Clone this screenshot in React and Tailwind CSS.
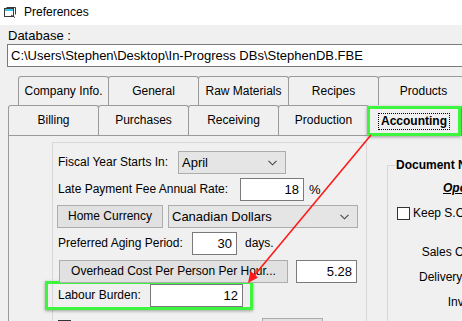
import React from 'react';

const rowOne = ['Company Info.', 'General', 'Raw Materials', 'Recipes', 'Products'];
const rowTwo = ['Billing', 'Purchases', 'Receiving', 'Production'];

function Tab({ label }) {
  return (
    <div className="w-[91px] h-full shrink-0 -mr-px flex items-center justify-center rounded-t-[3px] border-t border-l border-r border-[#9a9a9a] bg-[#f0f0f0]">
      {label}
    </div>
  );
}

function Chevron() {
  return (
    <svg width="9" height="6" viewBox="0 0 9 6" className="ml-auto mr-[8px]">
      <path d="M0.5 0.8 L4.5 4.8 L8.5 0.8" fill="none" stroke="#444" strokeWidth="1.1" />
    </svg>
  );
}

function Input({ value, className }) {
  return (
    <div className={`h-[23px] shrink-0 bg-white border border-[#7a7a7a] flex items-center justify-end pr-[4px] text-[13px] ${className}`}>
      {value}
    </div>
  );
}

function Button({ label, className }) {
  return (
    <div className={`h-[23px] shrink-0 bg-[#e1e1e1] border border-[#adadad] flex items-center justify-center text-[12px] ${className}`}>
      {label}
    </div>
  );
}

export default function App() {
  return (
    <div className="relative w-[462px] h-[321px] overflow-hidden bg-[#f0f0f0] text-black text-[12px] leading-[15px] font-['Liberation_Sans',Arial,sans-serif]">
      {/* Title bar */}
      <div className="h-[25px] bg-white flex items-center pl-[4px]">
        <svg width="12" height="11" viewBox="0 0 12 11">
          <rect x="0.5" y="1.5" width="9" height="8" fill="#fff" stroke="#3a3a3a" />
          <rect x="1" y="2" width="8" height="2" fill="#39c6e6" />
          <path d="M2.5 0.5 H11.5 V7.5" fill="none" stroke="#3a3a3a" />
          <path d="M7 8 L11 10.5" stroke="#3a3a3a" />
        </svg>
        <span className="ml-[8px] text-[12px]">Preferences</span>
      </div>

      {/* Database path */}
      <div className="pt-[3px] pl-[8px] text-[13px] h-[18px]">Database :</div>
      <div className="mt-[1px] ml-[7px] w-[480px] h-[23px] bg-white border border-[#7a7a7a] flex items-center pl-[3px] text-[13px]">
        C:\Users\Stephen\Desktop\In-Progress DBs\StephenDB.FBE
      </div>

      {/* Tabs */}
      <div className="mt-[9px] pl-[18px] flex h-[29px]">
        {rowOne.map(t => <Tab key={t} label={t} />)}
      </div>
      <div className="pl-[8px] flex h-[30px] items-start">
        {rowTwo.map(t => <Tab key={t} label={t} />)}
        <div className="relative z-10 -ml-[1px] mt-[1px] w-[94px] h-[30px] shrink-0 border-[3px] border-[#3cf53c] bg-[#f0f0f0] flex items-center justify-center shadow-[0_1px_3px_rgba(0,0,0,0.35)]">
          <span className="font-bold px-[2px] outline outline-1 outline-dotted outline-black">Accounting</span>
        </div>
        <div className="w-[90px] h-full shrink-0 rounded-t-[3px] border-t border-l border-[#9a9a9a]" />
      </div>

      {/* Tab panel */}
      <div className="ml-[8px] h-[200px] border-t border-l border-[#9a9a9a] flex items-start">
        {/* General accounting settings */}
        <div className="ml-[43px] mt-[6px] w-[315px] h-[200px] shrink-0 border-t border-l border-r border-[#d7d7d7] pl-[5px] pt-[8px]">
          <div className="flex items-center h-[23px]">
            <span className="w-[120px] shrink-0">Fiscal Year Starts In:</span>
            <div className="w-[108px] h-[23px] bg-[#e5e5e5] border border-[#acacac] flex items-center pl-[3px] text-[13px]">
              April
              <Chevron />
            </div>
          </div>

          <div className="flex items-center h-[23px] mt-[4px]">
            <span className="w-[182px] shrink-0">Late Payment Fee Annual Rate:</span>
            <Input value="18" className="w-[64px]" />
            <span className="ml-[5px] text-[13px]">%</span>
          </div>

          <div className="flex items-center h-[23px] mt-[4px]">
            <Button label="Home Currency" className="-ml-[1px] w-[106px]" />
            <div className="ml-[5px] w-[190px] h-[23px] shrink-0 bg-[#e5e5e5] border border-[#acacac] flex items-center pl-[3px] text-[13px]">
              Canadian Dollars
              <Chevron />
            </div>
          </div>

          <div className="flex items-center h-[23px] mt-[4px]">
            <span className="w-[134px] shrink-0">Preferred Aging Period:</span>
            <Input value="30" className="w-[45px]" />
            <span className="ml-[8px]">days.</span>
          </div>

          <div className="flex items-center h-[23px] mt-[5px]">
            <Button label="Overhead Cost Per Person Per Hour..." className="ml-[1px] w-[229px]" />
            <Input value="5.28" className="ml-[8px] w-[61px]" />
          </div>

          <div className="-ml-[13px] -mt-[2px] w-[208px] h-[29px] border-[3px] border-[#3cf53c] flex items-center shadow-[0_1px_3px_rgba(0,0,0,0.35)]">
            <span className="w-[102px] shrink-0 pl-[10px]">Labour Burden:</span>
            <Input value="12" className="w-[93px]" />
          </div>

          <div className="flex items-start mt-[8px]">
            <div className="w-[13px] h-[13px] mt-[2px] border border-[#333] bg-white" />
            <div className="ml-[191px] w-[61px] h-[23px] bg-[#e1e1e1] border border-[#adadad]" />
          </div>
        </div>

        {/* Document numbers */}
        <div className="relative ml-[20px] mt-[29px] w-[200px] h-[200px] shrink-0 border-t border-l border-[#d7d7d7]">
          <span className="absolute -top-[8px] left-[8px] bg-[#f0f0f0] pr-[2px] font-bold whitespace-nowrap">Document Numbers</span>
          <div className="pt-[15px] pl-[55px] font-bold italic underline whitespace-nowrap">Open Documents</div>
          <div className="mt-[10px] ml-[9px] flex items-center whitespace-nowrap">
            <div className="w-[13px] h-[13px] border border-[#333] bg-white shrink-0" />
            <span className="ml-[3px]">Keep S.O. Numbers</span>
          </div>
          <div className="w-[111px] text-right whitespace-nowrap mt-[24px]">Sales Order #:</div>
          <div className="w-[111px] text-right whitespace-nowrap mt-[10px]">Delivery Slip #:</div>
          <div className="w-[111px] text-right whitespace-nowrap mt-[10px]">Invoice #:</div>
        </div>
      </div>

      {/* Annotation arrow */}
      <svg className="absolute inset-0 pointer-events-none z-20" width="462" height="321">
        <line x1="371" y1="135" x2="253" y2="277" stroke="#ff1a1a" strokeWidth="1.6" />
        <polygon points="248,283 250.5,271 258,277.5" fill="#ff1a1a" />
      </svg>
    </div>
  );
}
